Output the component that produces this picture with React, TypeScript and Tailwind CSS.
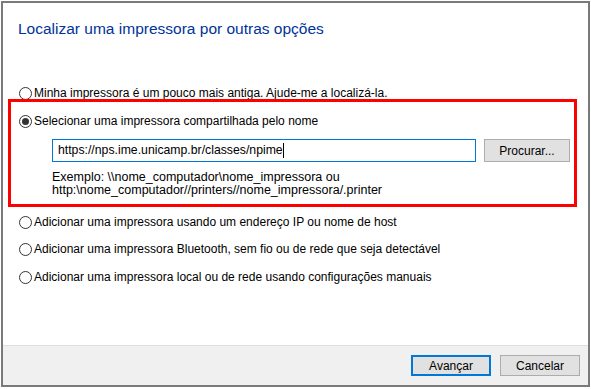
import React from 'react';

const Radio: React.FC<{ checked?: boolean }> = ({ checked }) => (
    <span className="w-[13px] h-[13px] rounded-full border border-[#333333] bg-white flex items-center justify-center shrink-0">
        {checked && <span className="w-[7px] h-[7px] rounded-full bg-[#333333]" />}
    </span>
);

const Option: React.FC<{ label: string; checked?: boolean; className?: string }> = ({ label, checked, className }) => (
    <div className={`flex items-center h-[16px] gap-[2px] ${className ?? ''}`}>
        <Radio checked={checked} />
        <span className="leading-[16px]">{label}</span>
    </div>
);

const App: React.FC = () => {
    return (
        <div className="w-[591px] h-[389px] bg-white pl-px pt-px font-['Liberation_Sans',Arial,sans-serif] text-[12px] text-black">
            <div className="w-[589px] h-[386px] border-2 border-[#7a7a7a] flex flex-col">
                {/* Body */}
                <div className="flex-1 bg-white flex flex-col">
                    <h1 className="pl-[15px] pt-[16px] h-[36px] text-[15.5px] leading-[20px] text-[#003399] font-normal">
                        Localizar uma impressora por outras opções
                    </h1>

                    <Option className="ml-[16px] mt-[46px]" label="Minha impressora é um pouco mais antiga. Ajude-me a localizá-la." />

                    {/* Highlighted option */}
                    <div className="ml-[5px] mt-[-2px] w-[569px] h-[108px] border-[3px] border-[#ff0000] pl-[5px] pt-[11px]">
                        <Option checked label="Selecionar uma impressora compartilhada pelo nome" className="ml-[3px]" />
                        <div className="flex mt-[10px] ml-[36px]">
                            <div className="w-[424px] h-[23px] border border-[#0078d7] flex items-center pl-[5px] text-[12.25px]">
                                <span>https://nps.ime.unicamp.br/classes/npime</span>
                                <span className="w-px h-[15px] bg-black" />
                            </div>
                            <button className="ml-[8px] w-[86px] h-[23px] bg-[#e1e1e1] border border-[#adadad]">
                                Procurar...
                            </button>
                        </div>
                        <div className="ml-[36px] mt-[9px] leading-[13px] text-[12.5px]">
                            <p>Exemplo: \\nome_computador\nome_impressora ou</p>
                            <p>http:\nome_computador//printers//nome_impressora/.printer</p>
                        </div>
                    </div>

                    <Option className="ml-[16px] mt-[7px]" label="Adicionar uma impressora usando um endereço IP ou nome de host" />
                    <Option className="ml-[16px] mt-[11px]" label="Adicionar uma impressora Bluetooth, sem fio ou de rede que seja detectável" />
                    <Option className="ml-[16px] mt-[12px]" label="Adicionar uma impressora local ou de rede usando configurações manuais" />
                </div>

                {/* Footer */}
                <div className="h-[40px] bg-[#f0f0f0] border-t border-[#dfdfdf] flex items-start justify-end gap-[9px] pr-[8px] pt-[9px]">
                    <button className="w-[80px] h-[21px] bg-[#e1e1e1] border-2 border-[#0078d7] leading-none">Avançar</button>
                    <button className="w-[80px] h-[21px] bg-[#e1e1e1] border border-[#adadad] leading-none">Cancelar</button>
                </div>
            </div>
        </div>
    );
};

export default App;
